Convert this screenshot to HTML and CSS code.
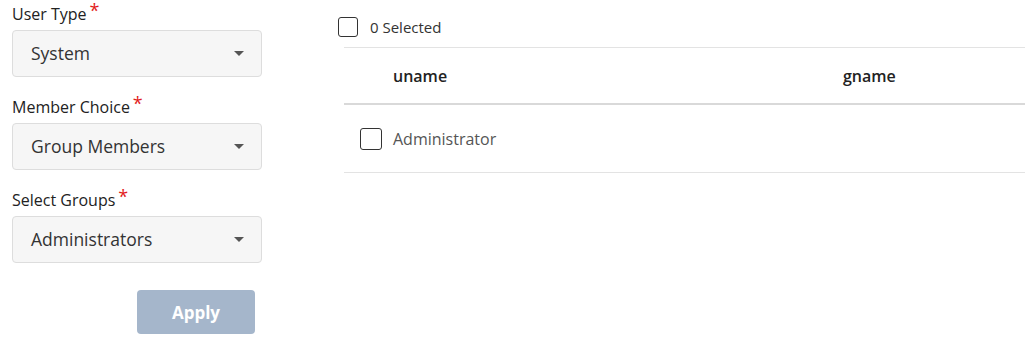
FILE: index.html
```html
<!DOCTYPE html>
<html lang="en">
<head>
    <meta charset="UTF-8">
    <title>Group Members</title>
    <link rel="stylesheet" href="styles.css">
</head>
<body>
    <div class="page">
        <!-- Filtros -->
        <div class="filters">
            <div class="field">
                <label class="field-label">User Type<span class="required">*</span></label>
                <div class="select-box">
                    <span class="select-value">System</span>
                    <span class="caret"></span>
                </div>
            </div>
            <div class="field">
                <label class="field-label">Member Choice<span class="required">*</span></label>
                <div class="select-box">
                    <span class="select-value">Group Members</span>
                    <span class="caret"></span>
                </div>
            </div>
            <div class="field">
                <label class="field-label">Select Groups<span class="required">*</span></label>
                <div class="select-box">
                    <span class="select-value">Administrators</span>
                    <span class="caret"></span>
                </div>
            </div>
            <div class="actions">
                <button class="apply-button" disabled>Apply</button>
            </div>
        </div>

        <!-- Resultados -->
        <div class="results">
            <div class="selection-bar">
                <span class="checkbox"></span>
                <span class="selection-count">0 Selected</span>
            </div>
            <div class="table">
                <div class="table-row table-head">
                    <div class="cell cell-check"></div>
                    <div class="cell cell-uname">uname</div>
                    <div class="cell cell-gname">gname</div>
                </div>
                <div class="table-row">
                    <div class="cell cell-check"><span class="checkbox"></span></div>
                    <div class="cell cell-uname">Administrator</div>
                    <div class="cell cell-gname"></div>
                </div>
            </div>
        </div>
    </div>
</body>
</html>
```

FILE: styles.css
```css
:root {
    --text-color: #333333;
    --muted-color: #555555;
    --border-color: #dddddd;
    --line-color: #e3e3e3;
    --select-bg: #f6f6f6;
    --required-color: #e21b1b;
    --button-disabled: #a5b6cb;
}

* {
    margin: 0;
    padding: 0;
    box-sizing: border-box;
    font-family: 'Open Sans', sans-serif;
}

body {
    background-color: #ffffff;
    color: var(--text-color);
}

.page {
    display: flex;
    align-items: flex-start;
}

.filters {
    width: 262px;
    padding-left: 12px;
    display: flex;
    flex-direction: column;
}

.field {
    display: flex;
    flex-direction: column;
    margin-bottom: 16px;
}

.field-label {
    font-size: 16px;
    line-height: 22px;
    height: 22px;
    margin-top: 3px;
    margin-bottom: 5px;
    color: #222222;
}

.required {
    color: var(--required-color);
    font-size: 18px;
    line-height: 18px;
    vertical-align: top;
    margin-left: 3px;
    position: relative;
    top: -2px;
}

.select-box {
    height: 47px;
    background-color: var(--select-bg);
    border: 1px solid var(--border-color);
    border-radius: 4px;
    display: flex;
    align-items: center;
    justify-content: space-between;
    padding: 0 17px 2px 18px;
}

.select-value {
    font-size: 17.5px;
    color: var(--text-color);
}

.caret {
    width: 0;
    height: 0;
    border-left: 5px solid transparent;
    border-right: 5px solid transparent;
    border-top: 5px solid #555555;
    margin-top: 2px;
}

.actions {
    display: flex;
    justify-content: flex-end;
    margin-top: 11px;
}

.apply-button {
    width: 118px;
    height: 44px;
    border: none;
    border-radius: 4px;
    background-color: var(--button-disabled);
    color: #ffffff;
    font-size: 17px;
    font-weight: bold;
    margin-right: 7px;
}

.results {
    flex: 1;
    margin-left: 76px;
    padding-top: 17px;
}

.selection-bar {
    display: flex;
    align-items: center;
    gap: 12px;
    height: 20px;
    margin-bottom: 10px;
}

.selection-count {
    font-size: 15px;
    color: var(--text-color);
}

.checkbox {
    display: inline-block;
    width: 20px;
    height: 20px;
    border: 1px solid #333333;
    border-radius: 3px;
    background: #ffffff;
}

.table {
    margin-left: 6px;
    border-top: 1px solid var(--line-color);
}

.table-row {
    display: flex;
    align-items: center;
    height: 68px;
    border-bottom: 1px solid var(--line-color);
}

.table-head {
    height: 57px;
    border-bottom: 2px solid #d9d9d9;
    font-size: 16px;
    font-weight: 600;
    color: #222222;
}

.cell-check {
    width: 49px;
    padding-left: 16px;
    display: flex;
    align-items: center;
}

.cell-check .checkbox {
    width: 22px;
    height: 22px;
}

.cell-uname {
    width: 450px;
    font-size: 16px;
}

.table-row .cell-uname {
    color: var(--muted-color);
}

.table-head .cell-uname {
    color: #222222;
}

.cell-gname {
    flex: 1;
    font-size: 16px;
}
```
